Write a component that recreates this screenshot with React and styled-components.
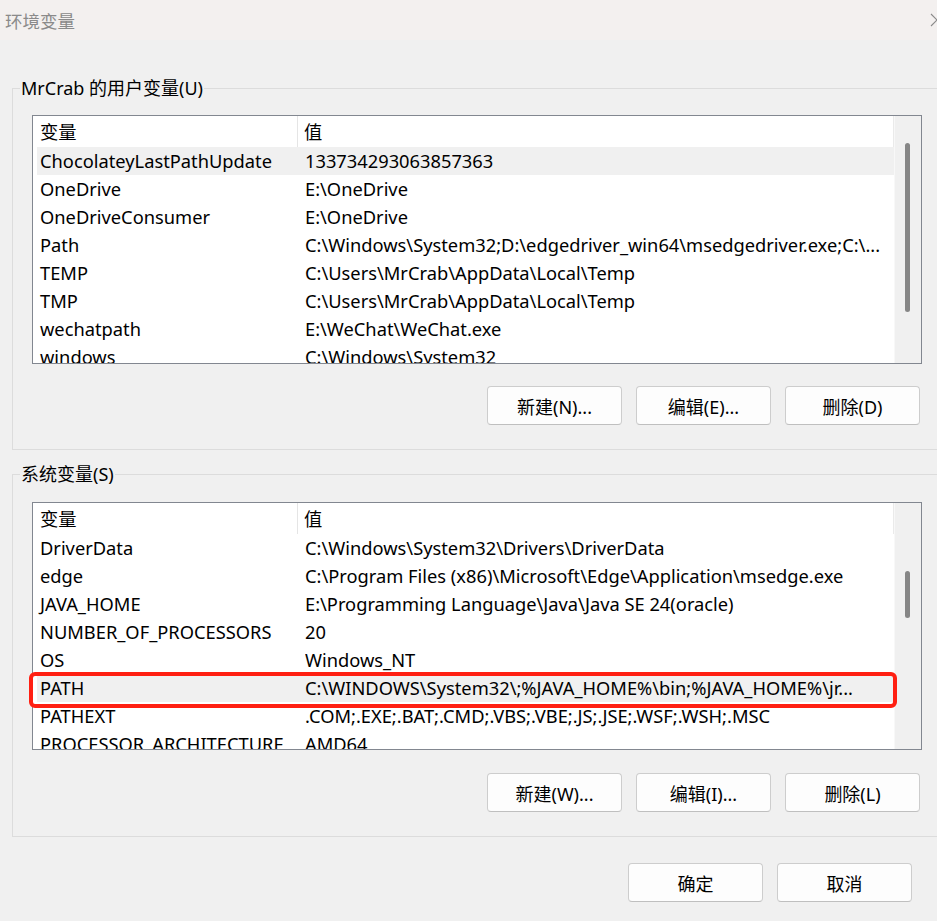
import styled, { createGlobalStyle } from "styled-components";

const GlobalStyle = createGlobalStyle`
  html, body {
    margin: 0;
    padding: 0;
    background: #f0f0f0;
  }
  body {
    font-family: "Noto Sans", "Noto Sans CJK SC", sans-serif;
    color: #000;
  }
  * {
    box-sizing: border-box;
  }
`;

const Window = styled.div`
  width: 937px;
  height: 921px;
  overflow: hidden;
  background: #f0f0f0;
  display: flex;
  flex-direction: column;
`;

const TitleBar = styled.div`
  height: 40px;
  flex-shrink: 0;
  display: flex;
  align-items: center;
  justify-content: space-between;
  padding-left: 5px;
  background: #f3f0ef;
  color: #8a8a8a;
  font-size: 17.5px;
  .close {
    margin-right: -8px;
  }
`;

const Body = styled.div`
  padding: 48px 0 0 12px;
`;

const Group = styled.div`
  position: relative;
  width: 950px;
  border: 1px solid #dcdcdc;
  padding: ${(p) => p.$top}px 0 24px 19px;
  margin-bottom: 24px;
`;

const Legend = styled.div`
  position: absolute;
  top: -13px;
  left: 7px;
  padding: 0 1px;
  background: #f0f0f0;
  font-size: 18px;
  line-height: 24px;
  white-space: nowrap;
`;

const ListBox = styled.div`
  width: 890px;
  height: ${(p) => p.$height}px;
  border: 1px solid #828790;
  background: #fff;
  display: flex;
`;

const ListContent = styled.div`
  flex: 1;
  min-width: 0;
  display: flex;
  flex-direction: column;
  clip-path: inset(0 -6px 0 -12px);
  font-size: 18.3px;
`;

const Header = styled.div`
  height: 31px;
  flex-shrink: 0;
  display: flex;
  align-items: center;
  padding-left: 4px;
  border-right: 1px solid #eaeaea;
`;

const HeaderCell = styled.div`
  height: 100%;
  display: flex;
  align-items: center;
  padding-bottom: 1px;
  &:first-child {
    width: 261px;
    padding-left: 3px;
    border-right: 1px solid #e5e5e5;
  }
  &:last-child {
    padding-left: 6px;
  }
`;

const Row = styled.div`
  position: relative;
  height: 28px;
  flex-shrink: 0;
  margin-left: 4px;
  padding-bottom: 2px;
  display: flex;
  align-items: center;
  white-space: nowrap;
  background: ${(p) => (p.$selected ? "#f0f0f0" : "transparent")};
  ${(p) =>
    p.$marked &&
    `
    &::after {
      content: "";
      position: absolute;
      top: -2px;
      bottom: -6px;
      left: -8px;
      right: -3px;
      border: 4px solid #ff1f12;
      border-radius: 6px;
    }
  `}
`;

const NameCell = styled.div`
  width: 268px;
  flex-shrink: 0;
  padding-left: 3px;
  overflow: hidden;
`;

const ValueCell = styled.div`
  flex: 1;
  min-width: 0;
  overflow: hidden;
`;

const ScrollTrack = styled.div`
  width: 27px;
  flex-shrink: 0;
  background: #f0f0f0;
  border-left: 1px solid #f8f8f8;
`;

const Thumb = styled.div`
  width: 5px;
  margin-left: 10px;
  margin-top: ${(p) => p.$top}px;
  height: ${(p) => p.$size}px;
  border-radius: 3px;
  background: #868686;
`;

const ButtonRow = styled.div`
  width: 888px;
  margin-top: ${(p) => p.$gap}px;
  display: flex;
  justify-content: flex-end;
  gap: 14px;
`;

const Button = styled.button`
  width: 135px;
  height: 39px;
  border: 1px solid #cdcdcd;
  border-bottom-color: #bfbfbf;
  border-radius: 4px;
  background: #fdfdfd;
  font-family: "Noto Sans", "Noto Sans CJK SC", sans-serif;
  font-size: 18px;
  color: #000;
  padding: 0;
`;

const Footer = styled.div`
  margin-top: 2px;
  padding-right: 25px;
  display: flex;
  justify-content: flex-end;
  gap: 14px;
`;

const userVars = [
  ["ChocolateyLastPathUpdate", "133734293063857363", true],
  ["OneDrive", "E:\\OneDrive"],
  ["OneDriveConsumer", "E:\\OneDrive"],
  ["Path", "C:\\Windows\\System32;D:\\edgedriver_win64\\msedgedriver.exe;C:\\..."],
  ["TEMP", "C:\\Users\\MrCrab\\AppData\\Local\\Temp"],
  ["TMP", "C:\\Users\\MrCrab\\AppData\\Local\\Temp"],
  ["wechatpath", "E:\\WeChat\\WeChat.exe"],
  ["windows", "C:\\Windows\\System32"],
];

const systemVars = [
  ["DriverData", "C:\\Windows\\System32\\Drivers\\DriverData"],
  ["edge", "C:\\Program Files (x86)\\Microsoft\\Edge\\Application\\msedge.exe"],
  ["JAVA_HOME", "E:\\Programming Language\\Java\\Java SE 24(oracle)"],
  ["NUMBER_OF_PROCESSORS", "20"],
  ["OS", "Windows_NT"],
  ["PATH", "C:\\WINDOWS\\System32\\;%JAVA_HOME%\\bin;%JAVA_HOME%\\jr...", true, true],
  ["PATHEXT", ".COM;.EXE;.BAT;.CMD;.VBS;.VBE;.JS;.JSE;.WSF;.WSH;.MSC"],
  ["PROCESSOR_ARCHITECTURE", "AMD64"],
];

const VarList = ({ rows, height, thumbTop, thumbSize }) => (
  <ListBox $height={height}>
    <ListContent>
      <Header>
        <HeaderCell>变量</HeaderCell>
        <HeaderCell>值</HeaderCell>
      </Header>
      {rows.map(([name, value, selected, marked]) => (
        <Row key={name} $selected={selected} $marked={marked}>
          <NameCell>{name}</NameCell>
          <ValueCell>{value}</ValueCell>
        </Row>
      ))}
    </ListContent>
    <ScrollTrack>
      <Thumb $top={thumbTop} $size={thumbSize} />
    </ScrollTrack>
  </ListBox>
);

const App = () => {
  return (
    <Window>
      <GlobalStyle />
      <TitleBar>
        <span>环境变量</span>
        <svg className="close" width="16" height="16" viewBox="0 0 16 16">
          <path d="M2 2 L14 14 M14 2 L2 14" stroke="#8a8a8a" strokeWidth="1.1" fill="none" />
        </svg>
      </TitleBar>
      <Body>
        <Group $top={26}>
          <Legend>MrCrab 的用户变量(U)</Legend>
          <VarList rows={userVars} height={249} thumbTop={27} thumbSize={169} />
          <ButtonRow $gap={22}>
            <Button>新建(N)...</Button>
            <Button>编辑(E)...</Button>
            <Button>删除(D)</Button>
          </ButtonRow>
        </Group>
        <Group $top={27}>
          <Legend>系统变量(S)</Legend>
          <VarList rows={systemVars} height={248} thumbTop={68} thumbSize={47} />
          <ButtonRow $gap={23}>
            <Button>新建(W)...</Button>
            <Button>编辑(I)...</Button>
            <Button>删除(L)</Button>
          </ButtonRow>
        </Group>
      </Body>
      <Footer>
        <Button>确定</Button>
        <Button>取消</Button>
      </Footer>
    </Window>
  );
};

export default App;
